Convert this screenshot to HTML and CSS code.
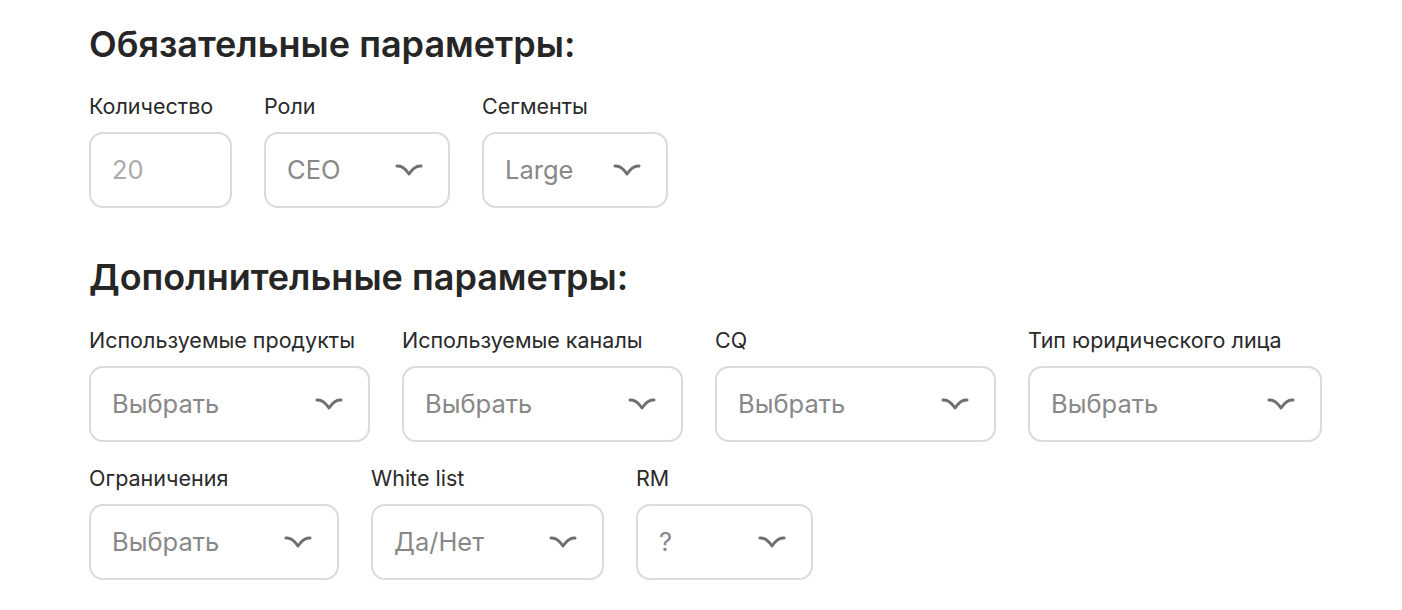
FILE: index.html
```html
<!DOCTYPE html>
<html lang="ru">
<head>
<meta charset="utf-8">
<link rel="stylesheet" href="styles.css">
</head>
<body>
<main class="page">
  <h2 class="title t1">Обязательные параметры:</h2>
  <div class="row r1">
    <div class="field w143">
      <div class="label">Количество</div>
      <div class="box"><span class="value light">20</span></div>
    </div>
    <div class="field w186">
      <div class="label">Роли</div>
      <div class="box"><span class="value">CEO</span><svg class="chev" viewBox="0 0 28 14"><path d="M2 3 C6 2.5 10 5 14 11 C18 5 22 2.5 26 3"/></svg></div>
    </div>
    <div class="field w186">
      <div class="label">Сегменты</div>
      <div class="box"><span class="value">Large</span><svg class="chev" viewBox="0 0 28 14"><path d="M2 3 C6 2.5 10 5 14 11 C18 5 22 2.5 26 3"/></svg></div>
    </div>
  </div>

  <h2 class="title t2">Дополнительные параметры:</h2>
  <div class="row r2">
    <div class="field w281">
      <div class="label">Используемые продукты</div>
      <div class="box"><span class="value">Выбрать</span><svg class="chev" viewBox="0 0 28 14"><path d="M2 3 C6 2.5 10 5 14 11 C18 5 22 2.5 26 3"/></svg></div>
    </div>
    <div class="field w281">
      <div class="label">Используемые каналы</div>
      <div class="box"><span class="value">Выбрать</span><svg class="chev" viewBox="0 0 28 14"><path d="M2 3 C6 2.5 10 5 14 11 C18 5 22 2.5 26 3"/></svg></div>
    </div>
    <div class="field w281">
      <div class="label">CQ</div>
      <div class="box"><span class="value">Выбрать</span><svg class="chev" viewBox="0 0 28 14"><path d="M2 3 C6 2.5 10 5 14 11 C18 5 22 2.5 26 3"/></svg></div>
    </div>
    <div class="field w294">
      <div class="label">Тип юридического лица</div>
      <div class="box"><span class="value">Выбрать</span><svg class="chev" viewBox="0 0 28 14"><path d="M2 3 C6 2.5 10 5 14 11 C18 5 22 2.5 26 3"/></svg></div>
    </div>
  </div>
  <div class="row r3">
    <div class="field w250">
      <div class="label">Ограничения</div>
      <div class="box"><span class="value">Выбрать</span><svg class="chev" viewBox="0 0 28 14"><path d="M2 3 C6 2.5 10 5 14 11 C18 5 22 2.5 26 3"/></svg></div>
    </div>
    <div class="field w233">
      <div class="label">White list</div>
      <div class="box"><span class="value">Да/Нет</span><svg class="chev" viewBox="0 0 28 14"><path d="M2 3 C6 2.5 10 5 14 11 C18 5 22 2.5 26 3"/></svg></div>
    </div>
    <div class="field w177">
      <div class="label">RM</div>
      <div class="box"><span class="value">?</span><svg class="chev" viewBox="0 0 28 14"><path d="M2 3 C6 2.5 10 5 14 11 C18 5 22 2.5 26 3"/></svg></div>
    </div>
  </div>
</main>
</body>
</html>
```

FILE: styles.css
```css
* { box-sizing: border-box; }
html, body { margin: 0; padding: 0; background: #ffffff; }
body { font-family: Inter, "Noto Sans", "Liberation Sans", sans-serif; color: #242424; }

.page {
  padding: 24px 0 0 89px;
  display: flex;
  flex-direction: column;
}

.title {
  margin: 0;
  font-size: 36px;
  line-height: 40px;
  font-weight: 600;
  color: #262626;
  letter-spacing: 0;
  white-space: nowrap;
}
.t1 { margin-bottom: 30px; }
.t2 { margin-top: 49px; margin-bottom: 31px; }

.row {
  display: flex;
  gap: 32px;
}
.r3 { margin-top: 24px; }

.field {
  display: flex;
  flex-direction: column;
  gap: 14px;
}
.w143 { width: 143px; }
.w186 { width: 186px; }
.w281 { width: 281px; }
.w294 { width: 294px; }
.w250 { width: 250px; }
.w233 { width: 233px; }
.w177 { width: 177px; }

.label {
  font-size: 21.5px;
  line-height: 24px;
  color: #2a2a2a;
  white-space: nowrap;
}

.box {
  height: 76px;
  border: 2px solid #dcdadc;
  border-radius: 14px;
  display: flex;
  align-items: center;
  justify-content: space-between;
  padding: 0 25px 0 21px;
}

.value {
  font-size: 25.5px;
  color: #888888;
  line-height: 30px;
  white-space: nowrap;
}
.value.light { color: #ababab; }

.chev {
  width: 28px;
  height: 14px;
  flex: none;
}
.chev path {
  fill: none;
  stroke: #6f6f6f;
  stroke-width: 3;
  stroke-linecap: round;
  stroke-linejoin: round;
}
```
